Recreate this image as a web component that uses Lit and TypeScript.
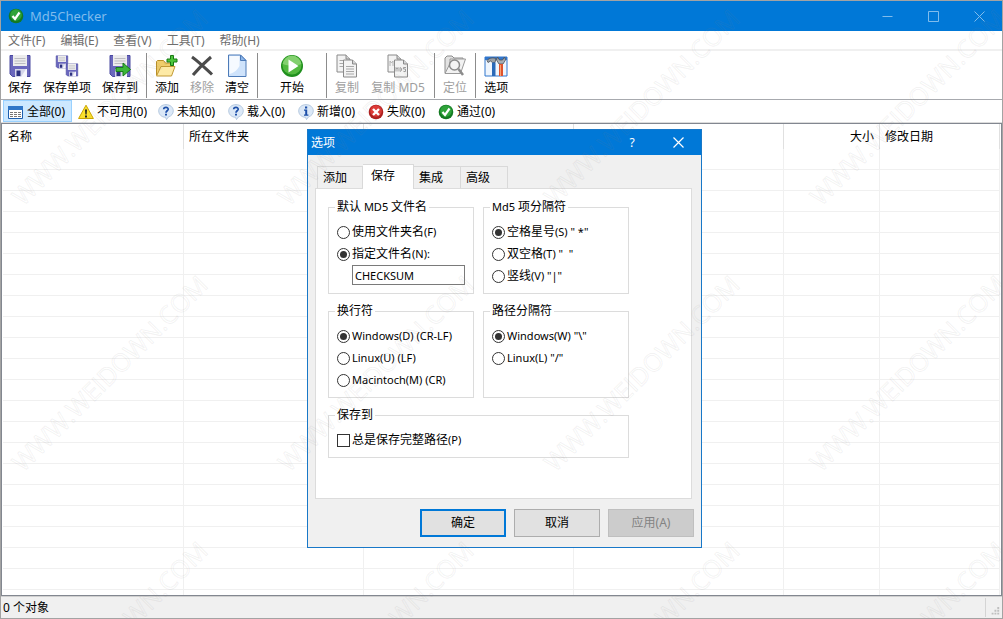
import { LitElement, html, svg, css, nothing } from "lit";
import { customElement, state } from "lit/decorators.js";
import { classMap } from "lit/directives/class-map.js";

const floppy = svg`
  <path d="M2 1.500h20v21H4.500L2 20z" fill="#6a67bd" stroke="#4b4aa0"/>
  <path d="M5 1h14v11H5z" fill="#ececec"/>
  <path d="M6.500 4.500h11M6.500 7h11M6.500 9.500h11" stroke="#bcbcc2"/>
  <path d="M7 15h12v8H7z" fill="#d5d6ea"/>
  <path d="M8.500 16.500h4V22h-4z" fill="#2d3180"/>
  <path d="M13 23l5-8h1v8z" fill="#f7f7fc"/>`;

const sheetLines = svg`<path d="M1 1h9l4 4v13H1z" fill="#f3f3f3" stroke="#8a8a8a"/><path d="M10 1v4h4" fill="#d5d5d5" stroke="#8a8a8a"/>`;

const orb = (light: string, dark: string) => svg`
  <circle cx="8" cy="8" r="7.300" fill="${dark}"/>
  <circle cx="8" cy="7" r="5.800" fill="${light}"/>`;

const bubble = svg`
  <path d="M8 .6c4.300 0 7.300 2.800 7.300 6.300 0 2.900-2 5.100-4.800 6L8.500 15.600 7.500 13.300C3.500 13.200.7 10.400.7 6.900.7 3.400 3.700.6 8 .6z" fill="#dbe8f7" stroke="#a8bfd8" stroke-width=".8"/>`;

const icons: Record<string, unknown> = {
  save: floppy,
  saveItem: svg`<g transform="translate(0 1) scale(.58)">${floppy}</g><g transform="translate(10 9) scale(.58)">${floppy}</g>`,
  saveTo: svg`${floppy}<path d="M8 13.500h7V9l7.500 6.500-7.500 6.500v-4.500H8z" fill="#3cb53a" stroke="#167d17"/>`,
  add: svg`
    <path d="M1.500 21V7.500l1-1h6l2 2.500h8v4" fill="#f0cd6b" stroke="#b98f28"/>
    <path d="M1.500 22L6 12.500h14L16.500 22z" fill="#fdeaa6" stroke="#c29a36"/>
    <path d="M15.500 1.500h3V5H22v3h-3.500v3.500h-3V8H12V5h3.500z" fill="#4cc63c" stroke="#167a12"/>`,
  remove: svg`<path d="M2 3C9 8 15 14 22 20.500M21 3C14 9 8 15 3 21" fill="none" stroke="#4b4b4b" stroke-width="3"/>`,
  clear: svg`
    <path d="M3.500 1h12l5.500 5.500V22.500H3.500z" fill="#cfe3fb" stroke="#4d7bb8"/>
    <path d="M4.500 2h10v10c-3 5-6 7-10 8z" fill="#f6faff"/>
    <path d="M15.500 1v5.500H21z" fill="#8db7ea" stroke="#4d7bb8"/>`,
  start: svg`
    <circle cx="12" cy="12" r="11" fill="#1f8f1d"/>
    <circle cx="12" cy="11" r="9.600" fill="#52b93f"/>
    <path d="M2.600 10a9.500 9.500 0 0 1 18.800 0c-5 2-13 2-18.800 0z" fill="#83d06f"/>
    <path d="M8.500 5.500l10 6.500-10 6.500z" fill="#fff"/>`,
  copy: svg`
    <g transform="translate(1 0)">${sheetLines}<path d="M3.500 6.500h6M3.500 9.500h8M3.500 12.500h8" stroke="#a8a8a8"/></g>
    <g transform="translate(7.500 5)">${sheetLines}<path d="M3.500 7.500h8M3.500 10h8M3.500 12.500h8M3.500 15h8" stroke="#a8a8a8"/></g>`,
  copyMd5: svg`
    <g transform="translate(1 0)">${sheetLines}<path d="M3 12V7l1.500 2L6 7v5M8 12V7h2" fill="none" stroke="#b4b4b4"/></g>
    <g transform="translate(7.500 5)">${sheetLines}<path d="M2.500 12.500v-4l1 1.500 1-1.500v4M6.500 8.500v4l1.500-1v-2zM12.500 8.500h-2.500v1.500h2v2.500h-2" fill="none" stroke="#a0a0a0"/></g>`,
  locate: svg`
    <path d="M2 19V4l2-2h5l2 2h9v4" fill="#e2e2e2" stroke="#8c8c8c"/>
    <path d="M2 19.500l5-10V5h15.500l-5 14.500z" fill="#f2f2f2" stroke="#9a9a9a"/>
    <circle cx="11.500" cy="11" r="5" fill="#f4f4f4" stroke="#8c8c8c" stroke-width="1.500"/>
    <path d="M15.500 15l4.500 6" stroke="#8c8c8c" stroke-width="2.500"/>`,
  options: svg`
    <path d="M1 3h22v19H1z" fill="#eef5fd" stroke="#3176cd"/>
    <path d="M1 3h22v3H1z" fill="#3176cd"/>
    <path d="M3 6.500c2-3 7-3 9-2l-1 4H8.500l-2-1.500L4 8.500z" fill="#9aa0a6" stroke="#4c5157" stroke-width=".8"/>
    <path d="M8 8.500h3.500V22H8z" fill="#2a69b8"/>
    <path d="M13.500 3l2 3h3l2-3 1 3-2.500 4h-4L12.500 6z" fill="#a7adb3" stroke="#4c5157" stroke-width=".8"/>
    <path d="M15 10h4v12h-4z" fill="#e0532b"/>
    <path d="M16 11h1v11h-1z" fill="#f7a071"/>`,
  all: svg`
    <path d="M.5 2.500h14v12H.5z" fill="#fff" stroke="#1d5fae"/>
    <path d="M0 2h15v4H0z" fill="#2f76c8"/>
    <path d="M2 8.500h3M6 8.500h3M10 8.500h3M2 10.500h3M6 10.500h3M10 10.500h3M2 12.500h3M6 12.500h3M10 12.500h3" stroke="#777"/>`,
  warn: svg`
    <path d="M8 1.200L15.400 14.500H.6z" fill="#fbe02c" stroke="#c9a400" stroke-linejoin="round"/>
    <path d="M7 5.500h2l-.4 5H7.400zM7 11.500h2v2H7z" fill="#222"/>`,
  ask: svg`${bubble}<path d="M5.700 5.200C5.700 2.700 10.300 2.800 10.200 5.200 10.100 6.700 8 6.900 8 8.700" fill="none" stroke="#1d4fa8" stroke-width="1.700"/><path d="M7 9.700h2v1.800H7z" fill="#1d4fa8"/>`,
  info: svg`${bubble}<path d="M7 2.500h2.200v2H7zM6 5.500h3.200V10.500h1.200v1.300H6v-1.300h1.200V6.800H6z" fill="#1d4fa8"/>`,
  fail: svg`${orb("#dd3a36", "#b01c1c")}<path d="M5 5l6 6M11 5l-6 6" stroke="#fff" stroke-width="2.400"/>`,
  pass: svg`${orb("#2fa33a", "#137a22")}<path d="M4.500 8l2.500 3 4.500-6.500" fill="none" stroke="#fff" stroke-width="2.200"/>`,
};

const icon = (name: string, size: number) =>
  html`<svg class="icon" width=${size} height=${size} viewBox="0 0 ${size} ${size}" aria-hidden="true">${icons[name]}</svg>`;

interface Tool { icon: string; label: string; off?: boolean; size?: "main" | "long" }

const toolGroups: Tool[][] = [
  [{ icon: "save", label: "保存" }, { icon: "saveItem", label: "保存单项" }, { icon: "saveTo", label: "保存到" }],
  [{ icon: "add", label: "添加" }, { icon: "remove", label: "移除", off: true }, { icon: "clear", label: "清空" }],
  [{ icon: "start", label: "开始", size: "main" }],
  [{ icon: "copy", label: "复制", off: true }, { icon: "copyMd5", label: "复制 MD5", off: true, size: "long" }],
  [{ icon: "locate", label: "定位", off: true }],
  [{ icon: "options", label: "选项" }],
];

const filters = [
  ["all", "全部(0)"], ["warn", "不可用(0)"], ["ask", "未知(0)"], ["ask", "载入(0)"],
  ["info", "新增(0)"], ["fail", "失败(0)"], ["pass", "通过(0)"],
];

@customElement("options-dialog")
export class OptionsDialog extends LitElement {
  @state() private tab = "保存";

  static styles = css`
    :host {
      box-sizing: border-box;
      display: flex;
      flex-direction: column;
      border: 1px solid #1878c8;
      background: #f0f0f0;
      color: #000;
      font: 12px/16px "Noto Sans", "Noto Sans CJK SC", sans-serif;
    }
    * { box-sizing: border-box; }
    button, input { font: inherit; color: inherit; margin: 0; }
    .latin { font-size: 11px; white-space: pre; }
    .title {
      display: flex;
      align-items: center;
      height: 25px;
      padding-left: 3px;
      background: #0078d7;
      color: #fff;
    }
    .title h2 { flex: 1; margin: 0; font-size: 12px; font-weight: 400; }
    .title button { width: 46px; height: 25px; padding: 0; border: 0; background: none; color: #fff; }
    .title svg { display: block; margin: auto; }
    .body { padding: 9px 9px 0 7px; }
    .tabs { display: flex; align-items: flex-end; padding-left: 2px; }
    .tab {
      width: 47px;
      height: 22px;
      padding: 0 0 0 5px;
      border: 1px solid #d9d9d9;
      border-width: 1px 1px 0 0;
      background: #f0f0f0;
      text-align: left;
    }
    .tab:first-child { width: 46px; border-left-width: 1px; }
    .tab.on { width: 51px; height: 25px; margin-bottom: -1px; padding: 0 0 2px 8px; background: #fff; z-index: 1; }
    .panel {
      display: grid;
      grid-template-columns: 146px 146px;
      gap: 9px;
      align-content: start;
      height: 311px;
      padding: 10px 12px;
      border: 1px solid #dcdcdc;
      background: #fff;
    }
    fieldset { min-width: 0; margin: 0; padding: 6px 8px; border: 1px solid #dcdcdc; }
    fieldset.wide { grid-column: 1 / -1; }
    legend { margin-left: -2px; padding: 0 2px; line-height: 16px; }
    .option { display: flex; align-items: center; gap: 2px; height: 22px; white-space: nowrap; }
    .option input {
      flex: none;
      appearance: none;
      width: 13px;
      height: 13px;
      padding: 2px;
      border: 1px solid #333;
      background: #fff content-box;
    }
    .option input[type="radio"] { border-radius: 50%; }
    .option input:checked { background-color: #333; }
    .name {
      display: block;
      width: 113px;
      height: 20px;
      margin: 0 0 2px 15px !important;
      padding: 0 2px;
      border: 1px solid #7a7a7a;
      background: #fff;
      font-size: 11px !important;
    }
    .buttons { display: flex; justify-content: flex-end; gap: 8px; padding: 10px 7px; }
    .buttons button { width: 86px; height: 28px; padding: 0; border: 1px solid #adadad; background: #e1e1e1; }
    .buttons .ok { border: 2px solid #0078d7; }
    .buttons button:disabled { border-color: #bfbfbf; background: #ccc; color: #838383; }
  `;

  /* Latin runs are set one pixel smaller than the Chinese text around them. */
  private mixed(text: string) {
    return text
      .split(/([\x20-\x7e]+)/)
      .filter(Boolean)
      .map((part) => (/^[\x20-\x7e]/.test(part) ? html`<span class="latin">${part}</span>` : part));
  }

  private radios(name: string, legend: string, options: string[], chosen: number, extra: unknown = nothing) {
    return html`<fieldset>
      <legend>${this.mixed(legend)}</legend>
      ${options.map((text, i) => html`<label class="option">
        <input type="radio" name=${name} ?checked=${i === chosen} /><span>${this.mixed(text)}</span>
      </label>`)}
      ${extra}
    </fieldset>`;
  }

  render() {
    return html`
      <div class="title">
        <h2>选项</h2>
        <button aria-label="帮助">?</button>
        <button aria-label="关闭">
          <svg width="11" height="11" viewBox="0 0 11 11"><path d="M.5.5l10 10M10.500.5l-10 10" stroke="#fff" stroke-width="1.200"/></svg>
        </button>
      </div>
      <div class="body">
        <div class="tabs" role="tablist">
          ${["添加", "保存", "集成", "高级"].map((t) => html`<button
            role="tab" aria-selected=${t === this.tab}
            class=${classMap({ tab: true, on: t === this.tab })}
            @click=${() => (this.tab = t)}>${t}</button>`)}
        </div>
        <div class="panel" role="tabpanel">
          ${this.radios("file", "默认 MD5 文件名", ["使用文件夹名(F)", "指定文件名(N):"], 1,
            html`<input class="name" aria-label="指定文件名" value="CHECKSUM" />`)}
          ${this.radios("item", "Md5 项分隔符", ['空格星号(S) " *"', '双空格(T) "  "', '竖线(V) "|"'], 0)}
          ${this.radios("line", "换行符", ["Windows(D) (CR-LF)", "Linux(U) (LF)", "Macintoch(M) (CR)"], 0)}
          ${this.radios("path", "路径分隔符", ['Windows(W) "\\"', 'Linux(L) "/"'], 0)}
          <fieldset class="wide">
            <legend>保存到</legend>
            <label class="option"><input type="checkbox" /><span>${this.mixed("总是保存完整路径(P)")}</span></label>
          </fieldset>
        </div>
      </div>
      <div class="buttons">
        <button class="ok">确定</button>
        <button>取消</button>
        <button disabled>应用(A)</button>
      </div>`;
  }
}

@customElement("app-root")
export class AppRoot extends LitElement {
  @state() private filter = 0;

  static styles = css`
    :host {
      box-sizing: border-box;
      position: relative;
      display: flex;
      flex-direction: column;
      height: 100vh;
      overflow: hidden;
      border: 1px solid #a3a3a3;
      background: #fff;
      color: #000;
      font: 12px/16px "Noto Sans", "Noto Sans CJK SC", sans-serif;
    }
    * { box-sizing: border-box; }
    button { font: inherit; color: inherit; margin: 0; border: 0; background: none; }
    .icon { display: block; flex: none; }
    .title { display: flex; align-items: center; height: 30px; padding-left: 7px; background: #0078d7; color: #80bcec; }
    .title h1 { flex: 1; margin: 0 0 0 6px; font-size: 13px; font-weight: 400; }
    .title button { width: 46px; height: 30px; padding: 0; }
    .title button svg { display: block; margin: auto; }
    .menu { display: flex; gap: 3px; height: 20px; padding-left: 1px; border-bottom: 2px solid #f0f0f0; }
    .menu button { padding: 1px 6px 0; line-height: 18px; color: #6d6d6d; }
    .tools { display: flex; gap: 1px; height: 49px; padding: 2px 2px 0; border-bottom: 1px solid #a7a9ae; }
    .tool { display: flex; flex-direction: column; align-items: center; gap: 2px; padding: 1px 5px; white-space: nowrap; }
    .tool.main { min-width: 62px; }
    .tool.long { min-width: 66px; }
    .tool:disabled { color: #a0a0a0; }
    .split { width: 1px; height: 45px; margin: 0 2px; background: #8c8c8c; }
    .filters { display: flex; align-items: center; gap: 1px; height: 23px; padding: 0 2px; border-bottom: 1px solid #dcdcdc; }
    .filter {
      display: flex;
      align-items: center;
      gap: 3px;
      min-width: 69px;
      height: 22px;
      padding: 2px 4px 0;
      border: 1px solid transparent;
      white-space: nowrap;
    }
    .filter.on { border-color: #99d1ff; background: #cce8ff; }
    .list { flex: 1; min-height: 0; overflow: hidden; padding: 0 1px; border: 1px solid #828790; }
    table { width: 100%; table-layout: fixed; border-collapse: separate; border-spacing: 0; }
    .c1 { width: 181px; }
    .c2 { width: 180px; }
    .c3 { width: 210px; }
    .c5 { width: 96px; }
    .c6 { width: 120px; }
    th { height: 25px; padding: 0 5px; border-right: 1px solid #e0e0e0; font-weight: 400; text-align: left; }
    th.num { text-align: right; }
    td { height: 21px; padding: 0; border: 1px solid #f0f0f0; border-width: 0 1px 1px 0; }
    .status {
      display: flex;
      align-items: center;
      justify-content: space-between;
      height: 22px;
      padding-left: 2px;
      border-top: 1px solid #d0d0d0;
      background: #f0f0f0;
    }
    .grip { display: block; border-left: 1px solid #d4d4d4; }
    .dialog { position: absolute; left: 306px; top: 128px; width: 395px; }
    .edge { position: absolute; left: -1px; top: 179px; width: 1px; height: 30px; background: #b5504a; }
    .mark { position: absolute; inset: 0; width: 100%; height: 100%; pointer-events: none; }
    .mark text { fill: none; stroke: #808080; stroke-opacity: 0.1; font: 25px "Open Sans", sans-serif; }
  `;

  render() {
    return html`
      <header class="title">
        <svg class="icon" width="16" height="16" viewBox="0 0 16 16" aria-hidden="true">${icons.pass}</svg>
        <h1>Md5Checker</h1>
        ${[["最小化", "M.5 5.500h10"], ["最大化", "M.5.5h10v10H.5z"], ["关闭", "M.5.5l10 10M10.500.5l-10 10"]].map(
          ([label, d]) => html`<button aria-label=${label}>
            <svg width="11" height="11" viewBox="0 0 11 11"><path d=${d} fill="none" stroke="#80bcec"/></svg>
          </button>`)}
      </header>
      <nav class="menu">
        ${["文件(F)", "编辑(E)", "查看(V)", "工具(T)", "帮助(H)"].map((m) => html`<button>${m}</button>`)}
      </nav>
      <div class="tools" role="toolbar">
        ${toolGroups.map((group, i) => html`
          ${i ? html`<span class="split"></span>` : nothing}
          ${group.map((t) => html`<button
            class=${classMap({ tool: true, main: t.size === "main", long: t.size === "long" })} ?disabled=${t.off}>
            ${icon(t.icon, 24)}<span>${t.label}</span>
          </button>`)}`)}
      </div>
      <div class="filters">
        ${filters.map(([name, label], i) => html`<button
          class=${classMap({ filter: true, on: i === this.filter })}
          @click=${() => (this.filter = i)}>${icon(name, 16)}<span>${label}</span></button>`)}
      </div>
      <main class="list">
        <table>
          <colgroup>
            <col class="c1" /><col class="c2" /><col class="c3" /><col /><col class="c5" /><col class="c6" />
          </colgroup>
          <thead>
            <tr><th>名称</th><th>所在文件夹</th><th></th><th></th><th class="num">大小</th><th>修改日期</th></tr>
          </thead>
          <tbody>
            ${Array.from({ length: 22 }, () => html`<tr><td></td><td></td><td></td><td></td><td></td><td></td></tr>`)}
          </tbody>
        </table>
      </main>
      <footer class="status">
        <span>0 个对象</span>
        <svg class="grip" width="17" height="19" viewBox="0 0 17 19" aria-hidden="true">
          <path d="M12 9h2v2h-2zM9 12h2v2H9zM12 12h2v2h-2zM6 15h2v2H6zM9 15h2v2H9zM12 15h2v2h-2z" fill="#bfbfbf"/>
        </svg>
      </footer>
      <span class="edge"></span>
      <options-dialog class="dialog" role="dialog" aria-label="选项"></options-dialog>
      <svg class="mark" aria-hidden="true">
        ${[0, 1, 2].map((row) => [0, 1, 2, 3].map((col) => svg`
          <text transform="translate(${22 + col * 266} ${206 + row * 266}) rotate(-45)">WWW.WEIDOWN.COM</text>`))}
      </svg>`;
  }
}
